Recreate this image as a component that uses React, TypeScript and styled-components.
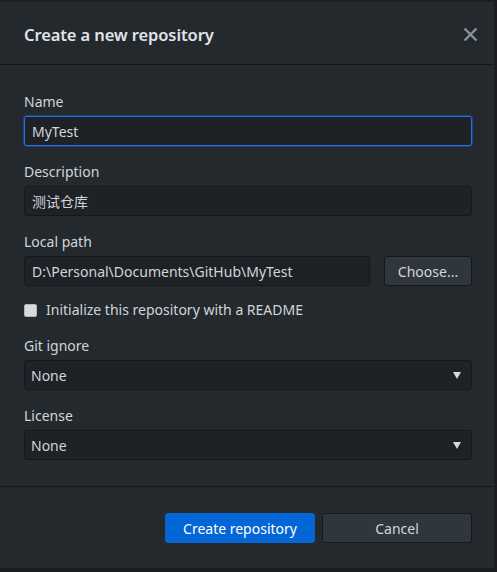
import React, { useState } from 'react';
import styled, { createGlobalStyle } from 'styled-components';

const colors = {
  frame: '#1b1d20',
  dialog: '#24292e',
  field: '#1e2125',
  fieldBorder: '#15171a',
  separator: '#141619',
  text: '#d1d5da',
  title: '#e1e4e8',
  muted: '#8b9299',
  blue: '#0366d6',
  button: '#2f363d',
};

const GlobalStyle = createGlobalStyle`
  html, body {
    margin: 0;
    padding: 0;
    background: ${colors.frame};
  }
  * {
    box-sizing: border-box;
  }
`;

const CreateRepositoryDialog: React.FC = () => {
  const [name, setName] = useState('MyTest');
  const [description, setDescription] = useState('测试仓库');
  const [path, setPath] = useState('D:\\Personal\\Documents\\GitHub\\MyTest');
  const [readme, setReadme] = useState(false);

  return (
    <Dialog>
      <GlobalStyle />
      <Header>
        <Title>Create a new repository</Title>
        <CloseButton aria-label="Close">
          <svg width="15" height="15" viewBox="0 0 15 15">
            <path d="M1.5 1.5 L13.5 13.5 M13.5 1.5 L1.5 13.5" stroke="currentColor" strokeWidth="2.4" />
          </svg>
        </CloseButton>
      </Header>

      <Body>
        <Field>
          <Label>Name</Label>
          <TextInput focused value={name} onChange={e => setName(e.target.value)} />
        </Field>

        <Field>
          <Label>Description</Label>
          <TextInput value={description} onChange={e => setDescription(e.target.value)} />
        </Field>

        <Field>
          <Label>Local path</Label>
          <PathRow>
            <TextInput value={path} onChange={e => setPath(e.target.value)} />
            <ChooseButton>Choose...</ChooseButton>
          </PathRow>
        </Field>

        <CheckRow onClick={() => setReadme(!readme)}>
          <CheckBox checked={readme} />
          <CheckLabel>Initialize this repository with a README</CheckLabel>
        </CheckRow>

        <Field>
          <Label>Git ignore</Label>
          <Select>
            <span>None</span>
            <Arrow />
          </Select>
        </Field>

        <Field>
          <Label>License</Label>
          <Select>
            <span>None</span>
            <Arrow />
          </Select>
        </Field>
      </Body>

      <Footer>
        <FooterButton primary>Create repository</FooterButton>
        <FooterButton>Cancel</FooterButton>
      </Footer>
    </Dialog>
  );
};

const Dialog = styled.div`
  width: 497px;
  height: 572px;
  display: flex;
  flex-direction: column;
  background: ${colors.dialog};
  border-top: 2px solid ${colors.frame};
  border-right: 3px solid ${colors.frame};
  border-bottom: 4px solid ${colors.frame};
  font-family: 'Noto Sans', 'Noto Sans CJK SC', sans-serif;
  font-size: 14px;
  color: ${colors.text};
`;

const Header = styled.div`
  height: 63px;
  flex-shrink: 0;
  display: flex;
  align-items: center;
  justify-content: space-between;
  padding: 2px 16px 0 24px;
  border-bottom: 1px solid ${colors.separator};
`;

const Title = styled.h1`
  margin: 0;
  font-size: 16.5px;
  font-weight: 600;
  letter-spacing: -0.1px;
  color: ${colors.title};
`;

const CloseButton = styled.button`
  background: none;
  border: none;
  padding: 0;
  display: flex;
  color: ${colors.muted};
  cursor: pointer;
`;

const Body = styled.div`
  flex: 1;
  display: flex;
  flex-direction: column;
  gap: 16px;
  padding: 27px 22px 0 24px;
  border-bottom: 1px solid ${colors.separator};
`;

const Field = styled.div`
  display: flex;
  flex-direction: column;
  gap: 4px;
`;

const Label = styled.label`
  line-height: 20px;
  height: 20px;
`;

const TextInput = styled.input<{ focused?: boolean }>`
  flex: 1 1 auto;
  width: 100%;
  min-width: 0;
  height: 30px;
  padding: 0 7px;
  background: ${colors.field};
  border: 1px solid ${props => (props.focused ? '#1f6feb' : colors.fieldBorder)};
  border-radius: 3px;
  box-shadow: ${props => (props.focused ? '0 0 0 1px rgba(31, 111, 235, 0.35)' : 'none')};
  color: ${colors.text};
  font-family: inherit;
  font-size: 14px;
  outline: none;
`;

const PathRow = styled.div`
  display: flex;
  gap: 14px;
`;

const ChooseButton = styled.button`
  flex-shrink: 0;
  width: 88px;
  height: 30px;
  background: ${colors.button};
  border: 1px solid ${colors.fieldBorder};
  border-radius: 3px;
  color: ${colors.text};
  font-family: inherit;
  font-size: 14px;
  padding: 0;
`;

const CheckRow = styled.div`
  display: flex;
  align-items: center;
  gap: 9px;
  height: 20px;
  margin: -2px 0 0;
  cursor: pointer;
`;

const CheckBox = styled.span<{ checked: boolean }>`
  width: 13px;
  height: 13px;
  border-radius: 2px;
  background: ${props => (props.checked ? colors.blue : '#d9d9d9')};
  border: 1px solid #b5b5b5;
`;

const CheckLabel = styled.span`
  line-height: 20px;
`;

const Select = styled.div`
  height: 30px;
  display: flex;
  align-items: center;
  justify-content: space-between;
  padding: 0 10px 0 6px;
  background: ${colors.field};
  border: 1px solid ${colors.fieldBorder};
  border-radius: 3px;
`;

const Arrow = styled.span`
  width: 0;
  height: 0;
  border-left: 4px solid transparent;
  border-right: 4px solid transparent;
  border-top: 7px solid #d6d8da;
`;

const Footer = styled.div`
  flex-shrink: 0;
  height: 81px;
  display: flex;
  justify-content: flex-end;
  align-items: flex-start;
  gap: 7px;
  padding: 26px 22px 0 0;
`;

const FooterButton = styled.button<{ primary?: boolean }>`
  width: 150px;
  height: 30px;
  padding: 0;
  border-radius: 3px;
  border: 1px solid ${props => (props.primary ? colors.blue : colors.fieldBorder)};
  background: ${props => (props.primary ? colors.blue : colors.button)};
  color: ${props => (props.primary ? '#ffffff' : colors.text)};
  font-family: inherit;
  font-size: 14px;
  cursor: pointer;
`;

export default CreateRepositoryDialog;
